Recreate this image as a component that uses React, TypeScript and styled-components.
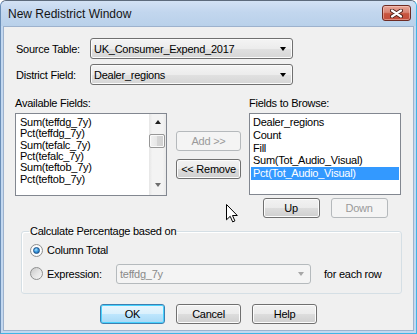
import styled, { createGlobalStyle } from 'styled-components';

const GlobalStyle = createGlobalStyle`
  html, body {
    margin: 0;
    padding: 0;
    background: #ffffff;
  }

  body {
    font-family: 'Liberation Sans', Arial, sans-serif;
    font-size: 11px;
    letter-spacing: -0.25px;
    color: #000000;
  }
`;

const AVAILABLE_FIELDS = [
  'Sum(teffdg_7y)',
  'Pct(teffdg_7y)',
  'Sum(tefalc_7y)',
  'Pct(tefalc_7y)',
  'Sum(teftob_7y)',
  'Pct(teftob_7y)',
];

const BROWSE_FIELDS = ['Dealer_regions', 'Count', 'Fill', 'Sum(Tot_Audio_Visual)', 'Pct(Tot_Audio_Visual)'];
const SELECTED_FIELD = 'Pct(Tot_Audio_Visual)';

const CloseIcon = () => (
  <svg width='13' height='9' viewBox='0 0 13 9'>
    <path d='M2 1.5 L11 7.5 M11 1.5 L2 7.5' stroke='#4a1d17' strokeWidth='4' strokeLinecap='round' />
    <path d='M2 1.5 L11 7.5 M11 1.5 L2 7.5' stroke='#ffffff' strokeWidth='2.2' strokeLinecap='round' />
  </svg>
);

const PointerIcon = () => (
  <svg width='12' height='19' viewBox='0 0 12 19'>
    <path
      d='M0.5 0.5 V15.8 L4.2 12.3 L6.7 17.9 L8.9 16.9 L6.5 11.5 H11.3 Z'
      fill='#ffffff'
      stroke='#000000'
      strokeWidth='1'
      strokeLinejoin='miter'
    />
  </svg>
);

const App = () => {
  return (
    <>
      <GlobalStyle />
      <Window>
        <TitleBar>
          <Title>New Redistrict Window</Title>
          <CloseButton aria-label='Close'>
            <CloseIcon />
          </CloseButton>
        </TitleBar>

        <Client>
          <SourceGrid>
            <Label>Source Table:</Label>
            <ComboBox $width={203} $height={21}>
              <span>UK_Consumer_Expend_2017</span>
              <ComboArrow />
            </ComboBox>
            <Label>District Field:</Label>
            <ComboBox $width={203} $height={21}>
              <span>Dealer_regions</span>
              <ComboArrow />
            </ComboBox>
          </SourceGrid>

          <FieldsGrid>
            <FieldLabel>Available Fields:</FieldLabel>
            <span />
            <FieldLabel>Fields to Browse:</FieldLabel>

            <ListBox $height={83}>
              <ListItems $padTop={3}>
                {AVAILABLE_FIELDS.map((field) => (
                  <ListItem key={field} $rowHeight={11.33} $indent={3}>
                    {field}
                  </ListItem>
                ))}
              </ListItems>
              <ScrollBar>
                <ScrollArrow $direction='up' />
                <ScrollTrack>
                  <ScrollThumb />
                </ScrollTrack>
                <ScrollArrow $direction='down' />
              </ScrollBar>
            </ListBox>

            <MoveButtons>
              <PushButton $width={65} $height={20} disabled>
                Add &gt;&gt;
              </PushButton>
              <PushButton $width={65} $height={20}>
                &lt;&lt; Remove
              </PushButton>
            </MoveButtons>

            <BrowseColumn>
              <ListBox $height={82}>
                <ListItems $padTop={2}>
                  {BROWSE_FIELDS.map((field) => (
                    <ListItem
                      key={field}
                      $rowHeight={12.75}
                      $indent={2}
                      $selected={field === SELECTED_FIELD}
                    >
                      {field}
                    </ListItem>
                  ))}
                </ListItems>
              </ListBox>
              <OrderButtons>
                <PushButton $width={57} $height={20}>
                  Up
                </PushButton>
                <PushButton $width={57} $height={20} disabled>
                  Down
                </PushButton>
              </OrderButtons>
            </BrowseColumn>
          </FieldsGrid>

          <GroupBox>
            <GroupLegend>Calculate Percentage based on</GroupLegend>
            <RadioRow $height={16}>
              <RadioOption>
                <RadioCircle $checked />
                <span>Column Total</span>
              </RadioOption>
            </RadioRow>
            <RadioRow $height={20} $gap={5.5}>
              <RadioOption $width={86}>
                <RadioCircle />
                <span>Expression:</span>
              </RadioOption>
              <ComboBox $width={195} $height={20} $disabled>
                <span>teffdg_7y</span>
                <ComboArrow $disabled />
              </ComboBox>
              <RowSuffix>for each row</RowSuffix>
            </RadioRow>
          </GroupBox>

          <DialogButtons>
            <PushButton $width={65} $height={20} $primary>
              OK
            </PushButton>
            <PushButton $width={65} $height={20}>
              Cancel
            </PushButton>
            <PushButton $width={65} $height={20}>
              Help
            </PushButton>
          </DialogButtons>
        </Client>

        <MousePointer>
          <PointerIcon />
        </MousePointer>
      </Window>
    </>
  );
};

const Window = styled.div`
  position: relative;
  display: flex;
  flex-direction: column;
  box-sizing: border-box;
  width: 417px;
  height: 334px;
  padding: 0 2px 2px;
  border: 1px solid;
  border-color: #5d6b7c #3fb5e6 #3fb5e6 #6b8fb8;
  border-radius: 6px 6px 0 0;
  background: #c3d8f0;
  overflow: hidden;
`;

const TitleBar = styled.div`
  display: flex;
  align-items: flex-start;
  height: 25px;
  margin: 0 -2px;
  padding: 0 5px 0 7px;
  background: linear-gradient(#d3e2f4 0%, #c2d6ee 45%, #b9d1ea 100%);
  border-radius: 5px 5px 0 0;
`;

const Title = styled.h1`
  margin: 0;
  font-size: 12px;
  font-weight: 400;
  letter-spacing: 0;
  line-height: 27px;
  color: #141414;
`;

const CloseButton = styled.div`
  display: flex;
  align-items: center;
  justify-content: center;
  box-sizing: border-box;
  width: 29px;
  height: 16px;
  margin: 4px 0 0 auto;
  border: 1px solid #6e2b23;
  border-radius: 3px;
  background: linear-gradient(#e8a597 0%, #d88474 45%, #c8553f 55%, #c24c3b 100%);
  box-shadow: inset 0 0 0 1px rgba(255, 220, 210, 0.45);
`;

const Client = styled.div`
  flex: 1;
  display: flex;
  flex-direction: column;
  border: 1px solid #9db2cd;
  background: #f0f0f0;
`;

const SourceGrid = styled.div`
  display: grid;
  grid-template-columns: 74px 203px;
  grid-auto-rows: 21px;
  row-gap: 5px;
  align-items: center;
  margin: 11px 0 0 12px;
`;

const Label = styled.span`
  white-space: nowrap;
`;

const ComboBox = styled.div<{ $width: number; $height: number; $disabled?: boolean }>`
  display: flex;
  align-items: center;
  justify-content: space-between;
  box-sizing: border-box;
  width: ${({ $width }) => $width}px;
  height: ${({ $height }) => $height}px;
  padding: 0 6px 0 3px;
  border: 1px solid ${({ $disabled }) => ($disabled ? '#b5babd' : '#707070')};
  border-radius: 3px;
  background: ${({ $disabled }) =>
    $disabled ? '#f4f4f4' : 'linear-gradient(#f4f4f4 0%, #ececec 50%, #e1e1e1 50%, #d6d6d6 100%)'};
  box-shadow: ${({ $disabled }) => ($disabled ? 'none' : 'inset 0 0 0 1px #fbfbfb')};
  color: ${({ $disabled }) => ($disabled ? '#8a8a8a' : '#000000')};
  white-space: nowrap;
`;

const ComboArrow = styled.i<{ $disabled?: boolean }>`
  width: 0;
  height: 0;
  margin-top: 1px;
  border-left: 3.5px solid transparent;
  border-right: 3.5px solid transparent;
  border-top: 4px solid ${({ $disabled }) => ($disabled ? '#a7a7a7' : '#000000')};
`;

const FieldsGrid = styled.div`
  display: grid;
  grid-template-columns: 152px 82px 152px;
  grid-template-rows: 13px auto;
  row-gap: 3px;
  margin: 12px 0 0 11px;
`;

const FieldLabel = styled.span`
  line-height: 13px;
  white-space: nowrap;
`;

const ListBox = styled.div<{ $height: number }>`
  display: flex;
  box-sizing: border-box;
  height: ${({ $height }) => $height}px;
  border: 1px solid #828790;
  background: #ffffff;
  overflow: hidden;
`;

const ListItems = styled.ul<{ $padTop: number }>`
  flex: 1;
  margin: 0;
  padding: ${({ $padTop }) => $padTop}px 1px 0;
  list-style: none;
`;

const ListItem = styled.li<{ $rowHeight: number; $indent: number; $selected?: boolean }>`
  height: ${({ $rowHeight }) => $rowHeight}px;
  padding-left: ${({ $indent }) => $indent}px;
  line-height: ${({ $rowHeight }) => $rowHeight}px;
  white-space: nowrap;
  background: ${({ $selected }) => ($selected ? '#3399ff' : 'transparent')};
  color: ${({ $selected }) => ($selected ? '#ffffff' : '#000000')};
`;

const ScrollBar = styled.div`
  display: flex;
  flex-direction: column;
  width: 17px;
  background: linear-gradient(90deg, #e6e6e6 0%, #f3f3f3 20%, #f3f3f3 80%, #e9e9e9 100%);
`;

const ScrollArrow = styled.div<{ $direction: 'up' | 'down' }>`
  display: flex;
  align-items: center;
  justify-content: center;
  height: 17px;

  &::after {
    content: '';
    width: 0;
    height: 0;
    border-left: 3.5px solid transparent;
    border-right: 3.5px solid transparent;
    ${({ $direction }) =>
      $direction === 'up'
        ? 'border-bottom: 4px solid #1f1f1f; margin-top: -1px;'
        : 'border-top: 4px solid #6d6d6d; margin-top: -3px;'}
  }
`;

const ScrollTrack = styled.div`
  flex: 1;
  padding: 3px 1px 0 0;
`;

const ScrollThumb = styled.div`
  box-sizing: border-box;
  height: 14px;
  border: 1px solid #979797;
  border-radius: 2px;
  background: linear-gradient(90deg, #f2f2f2 0%, #e6e6e6 50%, #d6d6d6 51%, #d0d0d0 100%);
  box-shadow: inset 0 0 0 1px #fafafa;
`;

const MoveButtons = styled.div`
  display: flex;
  flex-direction: column;
  gap: 8px;
  padding: 18px 0 0 9px;
`;

const BrowseColumn = styled.div`
  display: flex;
  flex-direction: column;
`;

const OrderButtons = styled.div`
  display: flex;
  justify-content: center;
  gap: 11px;
  margin-top: 3px;
`;

const PushButton = styled.button<{ $width: number; $height: number; $primary?: boolean }>`
  box-sizing: border-box;
  width: ${({ $width }) => $width}px;
  height: ${({ $height }) => $height}px;
  padding: 0;
  font-family: inherit;
  font-size: 11px;
  font-weight: 400;
  letter-spacing: -0.25px;
  color: #000000;
  border: 1px solid ${({ $primary }) => ($primary ? '#3c7fb1' : '#707070')};
  border-radius: 3px;
  background: ${({ $primary }) =>
    $primary
      ? 'linear-gradient(#eaf6fd 0%, #d9f0fc 50%, #bee6fd 50%, #a7d9f5 100%)'
      : 'linear-gradient(#f2f2f2 0%, #ebebeb 50%, #dddddd 50%, #cfcfcf 100%)'};
  box-shadow: inset 0 0 0 1px ${({ $primary }) => ($primary ? '#48d2fe' : '#fcfcfc')};

  &:disabled {
    color: #9a9a9a;
    border-color: #b5b9bc;
    background: #f4f4f4;
    box-shadow: none;
  }
`;

const GroupBox = styled.fieldset`
  box-sizing: border-box;
  width: 381px;
  margin: 7px 0 0 17px;
  padding: 4px 0 9px 7px;
  border: 1px solid #d5dfe5;
  border-radius: 3px;
  box-shadow: inset 1px 1px 0 #ffffff;
`;

const GroupLegend = styled.legend`
  padding: 0 1px;
  line-height: 13px;
  white-space: nowrap;
`;

const RadioRow = styled.div<{ $height: number; $gap?: number }>`
  display: flex;
  align-items: center;
  height: ${({ $height }) => $height}px;
  margin: ${({ $gap }) => $gap ?? 0}px 0 0 1px;
`;

const RadioOption = styled.label<{ $width?: number }>`
  display: flex;
  align-items: center;
  gap: 4px;
  width: ${({ $width }) => ($width ? `${$width}px` : 'auto')};
  white-space: nowrap;
`;

const RadioCircle = styled.span<{ $checked?: boolean }>`
  display: flex;
  align-items: center;
  justify-content: center;
  box-sizing: border-box;
  width: 13px;
  height: 13px;
  border: 1px solid #8e8f8f;
  border-radius: 50%;
  background: ${({ $checked }) =>
    $checked
      ? 'radial-gradient(circle, #ffffff 55%, #e2e2e2 100%)'
      : 'linear-gradient(135deg, #c8c8c8 0%, #e4e4e4 50%, #f7f7f7 100%)'};

  &::after {
    content: '';
    display: ${({ $checked }) => ($checked ? 'block' : 'none')};
    box-sizing: border-box;
    width: 7px;
    height: 7px;
    border: 1px solid #1b4f86;
    border-radius: 50%;
    background: radial-gradient(circle at 40% 35%, #a8e4ff 0%, #3d9be0 45%, #135a9e 100%);
  }
`;

const RowSuffix = styled.span`
  margin-left: 13px;
  white-space: nowrap;
`;

const DialogButtons = styled.div`
  display: flex;
  justify-content: center;
  gap: 11px;
  margin-top: 10px;
`;

const MousePointer = styled.div`
  position: absolute;
  top: 203px;
  left: 225px;
  width: 12px;
  height: 19px;
  pointer-events: none;
`;

export default App;
